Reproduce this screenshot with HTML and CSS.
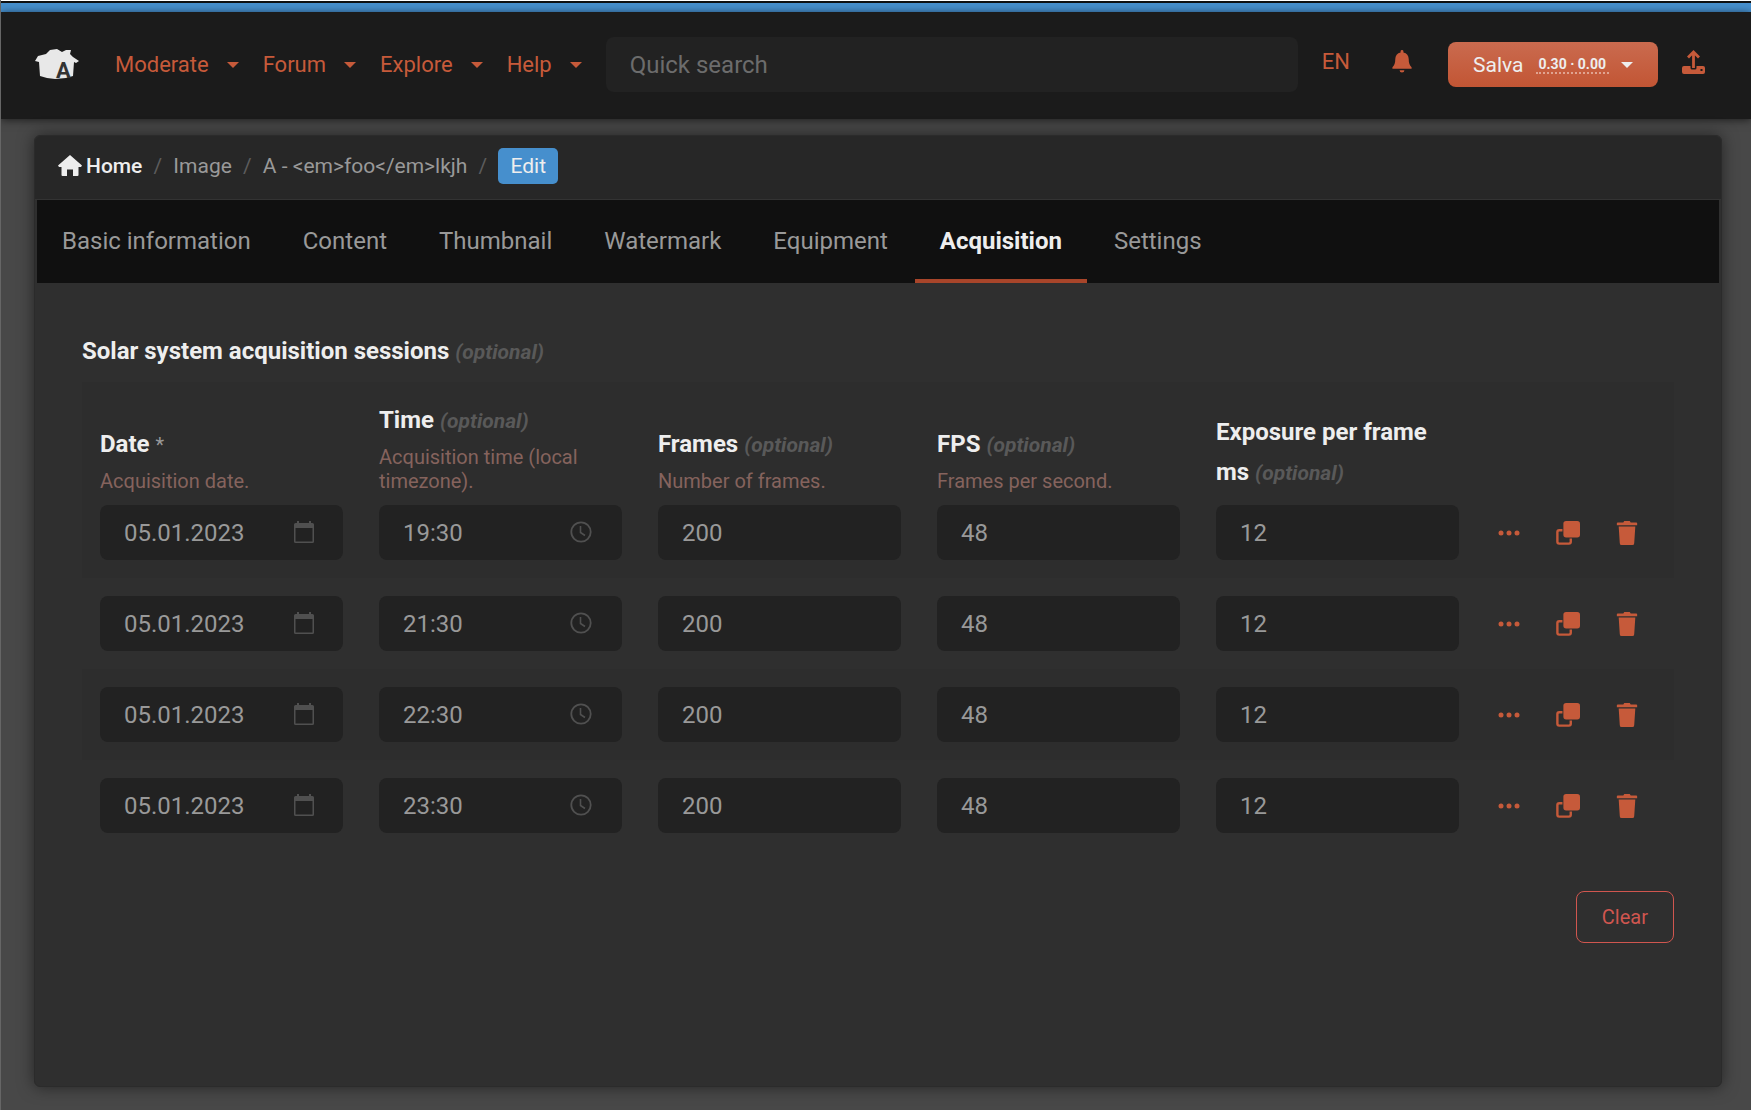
FILE: index.html
```html
<!DOCTYPE html>
<html lang="en">
<head>
    <meta charset="UTF-8">
    <meta name="viewport" content="width=device-width, initial-scale=1.0">
    <title>Edit acquisition</title>
    <link rel="stylesheet" href="styles.css">
</head>
<body>
    <!-- shared icons -->
    <svg class="icon-defs" aria-hidden="true">
        <symbol id="calendar" viewBox="0 0 20 22">
            <path fill-rule="evenodd" d="M3 0h2v2h10V0h2v2h1.500a1.500 1.500 0 0 1 1.500 1.500V20.500a1.500 1.500 0 0 1-1.500 1.500H1.500A1.500 1.500 0 0 1 0 20.500V3.500A1.500 1.500 0 0 1 1.500 2H3zM1.500 7v13.500h17V7z"/>
        </symbol>
        <symbol id="clock" viewBox="0 0 22 22">
            <circle cx="11" cy="11" r="9.700" fill="none" stroke="currentColor" stroke-width="1.800"/>
            <path d="M10.500 5v6.500l4.500 3" fill="none" stroke="currentColor" stroke-width="1.600"/>
        </symbol>
        <symbol id="dots" viewBox="0 0 24 24">
            <circle cx="4" cy="12" r="2.500"/><circle cx="12" cy="12" r="2.500"/><circle cx="20" cy="12" r="2.500"/>
        </symbol>
        <symbol id="copy" viewBox="0 0 26 26">
            <rect x="8" y="0" width="18" height="18" rx="3"/>
            <path d="M7 10H3.500a2 2 0 0 0-2 2v10.500a2 2 0 0 0 2 2H14a2 2 0 0 0 2-2V19" fill="none" stroke="currentColor" stroke-width="2.600"/>
        </symbol>
        <symbol id="trash" viewBox="0 0 22 26">
            <path d="M7 1.500 8 0h6l1 1.500h6a1 1 0 0 1 1 1V4.500H0V2.500a1 1 0 0 1 1-1zM2 6h18l-1.200 18a2 2 0 0 1-2 2H5.200a2 2 0 0 1-2-2z"/>
        </symbol>
    </svg>

    <div class="loading-bar"></div>
    <header class="navbar">
        <a href="#" class="logo" aria-label="Home page">
            <svg width="44" height="32" viewBox="0 0 44 32">
                <path fill="#e8e8e8" d="M0 12 3 7l8-2 4-4 7-1 5 3 4-2 5 0-1 4 3 3 6 4-3 2-2-1-1 14-7 2-11 1-8-1-7-2-1-14z"/>
                <text x="21" y="29" class="logo-letter">A</text>
            </svg>
        </a>
        <nav class="menu">
            <a href="#">Moderate <span class="caret"></span></a>
            <a href="#">Forum <span class="caret"></span></a>
            <a href="#">Explore <span class="caret"></span></a>
            <a href="#">Help <span class="caret"></span></a>
        </nav>
        <input type="search" class="search" placeholder="Quick search" aria-label="Quick search">
        <div class="tools">
            <a href="#" class="tool">EN</a>
            <a href="#" class="tool bell" aria-label="Notifications">
                <svg width="20" height="23" viewBox="0 0 20 24">
                    <path d="M10 0a1.500 1.500 0 0 1 1.500 1.500v1C15 3.200 17 6 17 9.500c0 4.500 1 6.500 3 8.500v1.500H0V18c2-2 3-4 3-8.500C3 6 5 3.200 8.500 2.500v-1A1.500 1.500 0 0 1 10 0zM7.500 21h5a2.500 2.500 0 0 1-5 0z"/>
                </svg>
            </a>
            <button type="button" class="user-button">
                Salva
                <span class="user-score">0.30 · 0.00</span>
                <span class="caret"></span>
            </button>
            <a href="#" class="tool" aria-label="Upload">
                <svg width="23" height="24" viewBox="0 0 23 24">
                    <path d="M11.500 18V3M6 7.500 11.500 2 17 7.500" fill="none" stroke="currentColor" stroke-width="2.800"/>
                    <path fill-rule="evenodd" d="M2 16h6.500v2a1.500 1.500 0 0 0 1.500 1.500h3a1.500 1.500 0 0 0 1.500-1.500v-2H21a2 2 0 0 1 2 2v4a2 2 0 0 1-2 2H2a2 2 0 0 1-2-2v-4a2 2 0 0 1 2-2zM18.500 19v2h2v-2z"/>
                </svg>
            </a>
        </div>
    </header>

    <main class="panel">
        <ol class="breadcrumb">
            <li>
                <a href="#" class="home">
                    <svg width="24" height="21" viewBox="0 0 24 21">
                        <path d="M12 0 24 10.500l-1 1.500h-2.500v8a1 1 0 0 1-1 1H15v-6.500H9V21H4.500a1 1 0 0 1-1-1v-8H1l-1-1.500z"/>
                    </svg>
                    Home
                </a>
            </li>
            <li><a href="#">Image</a></li>
            <li><a href="#">A - &lt;em&gt;foo&lt;/em&gt;lkjh</a></li>
            <li><span class="badge">Edit</span></li>
        </ol>

        <nav class="tabs">
            <a href="#">Basic information</a>
            <a href="#">Content</a>
            <a href="#">Thumbnail</a>
            <a href="#">Watermark</a>
            <a href="#">Equipment</a>
            <a href="#" class="active">Acquisition</a>
            <a href="#">Settings</a>
        </nav>

        <form class="acquisition">
            <h2>Solar system acquisition sessions <em>(optional)</em></h2>

            <table class="sessions">
                <thead>
                    <tr>
                        <th id="date">Date <span class="required">*</span><small>Acquisition date.</small></th>
                        <th id="time">Time <em>(optional)</em><small>Acquisition time (local timezone).</small></th>
                        <th id="frames">Frames <em>(optional)</em><small>Number of frames.</small></th>
                        <th id="fps">FPS <em>(optional)</em><small>Frames per second.</small></th>
                        <th id="exposure">Exposure per frame <span class="unit">ms <em>(optional)</em></span></th>
                        <td class="actions-col"></td>
                    </tr>
                </thead>
                <tbody>
                    <tr>
                        <td><div class="field"><input type="text" value="05.01.2023" aria-labelledby="date"><svg class="cal"><use href="#calendar"/></svg></div></td>
                        <td><div class="field"><input type="text" value="19:30" aria-labelledby="time"><svg><use href="#clock"/></svg></div></td>
                        <td><input type="text" value="200" aria-labelledby="frames"></td>
                        <td><input type="text" value="48" aria-labelledby="fps"></td>
                        <td><input type="text" value="12" aria-labelledby="exposure"></td>
                        <td>
                            <div class="actions">
                                <button type="button" aria-label="More"><svg><use href="#dots"/></svg></button>
                                <button type="button" aria-label="Copy"><svg><use href="#copy"/></svg></button>
                                <button type="button" aria-label="Delete"><svg><use href="#trash"/></svg></button>
                            </div>
                        </td>
                    </tr>
                    <tr>
                        <td><div class="field"><input type="text" value="05.01.2023" aria-labelledby="date"><svg class="cal"><use href="#calendar"/></svg></div></td>
                        <td><div class="field"><input type="text" value="21:30" aria-labelledby="time"><svg><use href="#clock"/></svg></div></td>
                        <td><input type="text" value="200" aria-labelledby="frames"></td>
                        <td><input type="text" value="48" aria-labelledby="fps"></td>
                        <td><input type="text" value="12" aria-labelledby="exposure"></td>
                        <td>
                            <div class="actions">
                                <button type="button" aria-label="More"><svg><use href="#dots"/></svg></button>
                                <button type="button" aria-label="Copy"><svg><use href="#copy"/></svg></button>
                                <button type="button" aria-label="Delete"><svg><use href="#trash"/></svg></button>
                            </div>
                        </td>
                    </tr>
                    <tr>
                        <td><div class="field"><input type="text" value="05.01.2023" aria-labelledby="date"><svg class="cal"><use href="#calendar"/></svg></div></td>
                        <td><div class="field"><input type="text" value="22:30" aria-labelledby="time"><svg><use href="#clock"/></svg></div></td>
                        <td><input type="text" value="200" aria-labelledby="frames"></td>
                        <td><input type="text" value="48" aria-labelledby="fps"></td>
                        <td><input type="text" value="12" aria-labelledby="exposure"></td>
                        <td>
                            <div class="actions">
                                <button type="button" aria-label="More"><svg><use href="#dots"/></svg></button>
                                <button type="button" aria-label="Copy"><svg><use href="#copy"/></svg></button>
                                <button type="button" aria-label="Delete"><svg><use href="#trash"/></svg></button>
                            </div>
                        </td>
                    </tr>
                    <tr>
                        <td><div class="field"><input type="text" value="05.01.2023" aria-labelledby="date"><svg class="cal"><use href="#calendar"/></svg></div></td>
                        <td><div class="field"><input type="text" value="23:30" aria-labelledby="time"><svg><use href="#clock"/></svg></div></td>
                        <td><input type="text" value="200" aria-labelledby="frames"></td>
                        <td><input type="text" value="48" aria-labelledby="fps"></td>
                        <td><input type="text" value="12" aria-labelledby="exposure"></td>
                        <td>
                            <div class="actions">
                                <button type="button" aria-label="More"><svg><use href="#dots"/></svg></button>
                                <button type="button" aria-label="Copy"><svg><use href="#copy"/></svg></button>
                                <button type="button" aria-label="Delete"><svg><use href="#trash"/></svg></button>
                            </div>
                        </td>
                    </tr>
                </tbody>
            </table>

            <div class="form-footer">
                <button type="button" class="clear-button">Clear</button>
            </div>
        </form>
    </main>
</body>
</html>
```
FILE: styles.css
```css
:root {
    --primary: #c65a3a;
    --blue: #468fcd;
    --text: #999;
    --light: #eee;
    --muted: #595959;
    --help: #85635d;
    --field: #222;
}

* {
    margin: 0;
    padding: 0;
    box-sizing: border-box;
    font-family: Roboto, sans-serif;
}

body {
    display: flex;
    flex-direction: column;
    min-height: 100vh;
    background: #484848;
    border-left: 1px solid #666;
    color: var(--text);
    font-size: 22px;
}

a {
    color: inherit;
    text-decoration: none;
}

svg {
    display: block;
    fill: currentColor;
}

button {
    cursor: pointer;
}

.icon-defs {
    display: none;
}

.loading-bar {
    height: 12px;
    background: var(--blue);
    border-top: 1px solid #fff;
    box-shadow: inset 0 2px #101214;
}

/* Navbar */
.navbar {
    display: flex;
    align-items: center;
    height: 107px;
    padding: 0 46px 2px 34px;
    background: #1b1b1b;
    color: var(--primary);
    box-shadow: 0 1px 8px rgba(0, 0, 0, 0.6);
}

.logo {
    margin-right: 36px;
}

.logo-letter {
    font-size: 22px;
    font-weight: 700;
    fill: #333;
}

.menu {
    display: flex;
    gap: 24px;
    margin-right: 24px;
}

.menu a {
    display: flex;
    align-items: center;
    gap: 18px;
}

.caret {
    border: 6px solid transparent;
    border-top-color: currentColor;
    border-bottom: 0;
}

.search {
    flex: 1;
    min-width: 0;
    height: 55px;
    padding: 0 24px;
    background: var(--field);
    border: 0;
    border-radius: 8px;
    color: var(--text);
    font-size: 24px;
}

.search::placeholder {
    color: #6c6c6c;
}

.tools {
    display: flex;
    align-items: center;
    margin-left: 24px;
}

.tool {
    padding-bottom: 6px;
}

.bell {
    margin: 0 36px 0 42px;
}

.user-button {
    display: flex;
    align-items: center;
    height: 45px;
    margin-right: 24px;
    padding: 0 25px;
    background: linear-gradient(#ca6b4f, #c25534);
    border: 0;
    border-radius: 8px;
    color: var(--light);
    font-size: 21px;
}

.user-score {
    margin: 0 12px;
    padding: 0 3px;
    border-bottom: 2px dotted #e0a491;
    font-size: 14px;
    font-weight: 700;
}

/* Panel */
.panel {
    flex: 1;
    margin: 16px 29px 23px 33px;
    padding: 0 2px;
    background: #2f2f2f;
    border: 1px solid #2b2b2b;
    border-radius: 6px;
    box-shadow: 0 0 16px rgba(0, 0, 0, 0.5);
}

.breadcrumb {
    display: flex;
    align-items: center;
    height: 64px;
    margin: 0 -2px;
    padding: 0 23px 4px;
    background: #272727;
    border-bottom: 1px solid #333;
    border-radius: 6px 6px 0 0;
    font-size: 21px;
    list-style: none;
}

.breadcrumb li {
    display: flex;
    align-items: center;
}

.breadcrumb li + li::before {
    content: "/";
    width: 31px;
    color: #5c5c5c;
    text-align: center;
}

.home {
    display: flex;
    align-items: center;
    gap: 4px;
    color: var(--light);
    font-weight: 500;
}

.badge {
    padding: 0 12px;
    background: var(--blue);
    border-radius: 5px;
    color: var(--light);
    line-height: 36px;
}

.tabs {
    display: flex;
    gap: 2px;
    background: #101010;
    font-size: 24px;
}

.tabs a {
    padding: 4px 25px 0;
    border-bottom: 4px solid transparent;
    line-height: 75px;
}

.tabs .active {
    border-color: #a8452a;
    color: var(--light);
    font-weight: 700;
}

/* Form */
.acquisition {
    padding: 48px 45px;
}

h2 {
    color: var(--light);
    font-size: 24px;
    line-height: 40px;
}

em {
    color: var(--muted);
    font-size: 21px;
    font-weight: 700;
}

.sessions {
    width: 100%;
    margin-top: 10px;
    border-collapse: collapse;
    table-layout: fixed;
}

.actions-col {
    width: 197px;
}

.sessions thead,
.sessions tbody tr:nth-child(odd) {
    background: #2d2d2d;
}

.sessions th {
    padding: 18px 18px 12px;
    color: var(--light);
    font-size: 24px;
    line-height: 40px;
    text-align: left;
    vertical-align: bottom;
}

.sessions small {
    display: block;
    margin-top: 4px;
    color: var(--help);
    font-size: 20px;
    font-weight: 400;
    line-height: 24px;
}

.unit {
    display: block;
}

.required {
    color: var(--text);
    font-size: 20px;
    font-weight: 400;
}

.sessions td {
    padding: 18px;
}

.sessions tbody tr:first-child td {
    padding-top: 0;
}

.sessions input {
    display: block;
    width: 100%;
    height: 55px;
    padding: 0 24px;
    background: var(--field);
    border: 0;
    border-radius: 8px;
    color: var(--text);
    font-size: 24px;
}

.field {
    position: relative;
}

.field svg {
    position: absolute;
    top: 16px;
    right: 30px;
    width: 22px;
    height: 22px;
    color: #505050;
}

.field .cal {
    right: 28px;
}

.actions {
    display: flex;
    gap: 31px;
}

.actions button {
    padding: 0 2px;
    background: none;
    border: 0;
    color: var(--primary);
}

.actions svg {
    width: 24px;
    height: 24px;
}

.form-footer {
    display: flex;
    justify-content: flex-end;
    margin-top: 40px;
}

.clear-button {
    height: 52px;
    padding: 0 25px;
    background: none;
    border: 1px solid #d0564f;
    border-radius: 8px;
    color: #d0564f;
    font-size: 20px;
}
```
